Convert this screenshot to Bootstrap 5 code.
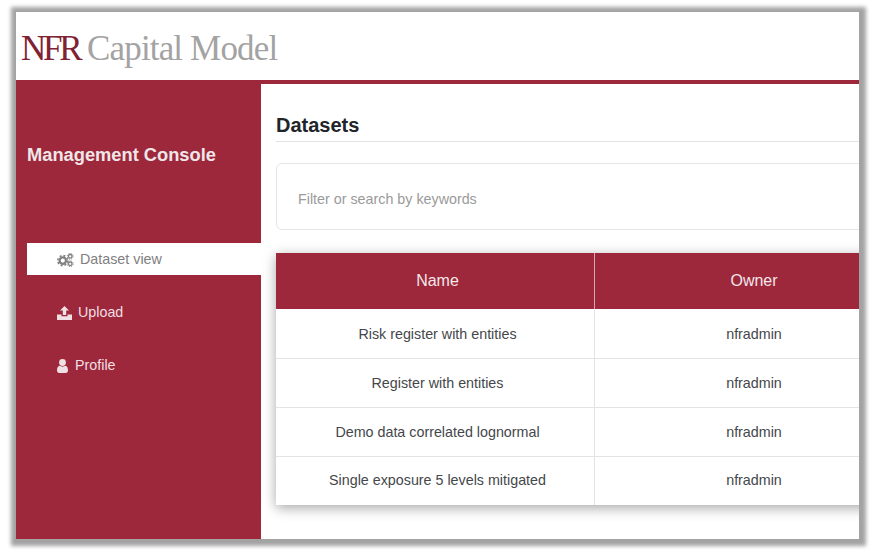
<!DOCTYPE html>
<html lang="en">
<head>
  <meta charset="UTF-8">
  <meta name="viewport" content="width=device-width, initial-scale=1">
  <title>NFR Capital Model</title>
  <link href="https://cdn.jsdelivr.net/npm/bootstrap@5.3.2/dist/css/bootstrap.min.css" rel="stylesheet">
  <style>
    body {
      background: #fff;
      height: 550px;
      overflow: hidden;
      font-family: "Liberation Sans", Arial, sans-serif;
      font-size: 14.3px;
    }
    .shot-frame {
      margin: 12px 17px 0 16px;
      height: 527px;
      background: #fff;
      overflow: hidden;
      box-shadow: 1px 1px 4px 6px #a3a3a3;
    }
    .brand-bar {
      height: 68px;
      padding: 6px 0 0 5px;
      font-family: "Liberation Serif", "Times New Roman", serif;
      font-size: 35px;
      letter-spacing: -.85px;
      color: #a3a3a3;
    }
    .brand-red { color: #7f2233; letter-spacing: -3.3px; }
    .side-panel {
      width: 245px;
      flex: none;
      background: #9d273b;
      color: #f1e6e8;
      padding-left: 11px;
    }
    .side-title {
      font-size: 18.3px;
      font-weight: 700;
      line-height: 22px;
      margin: 64px 0 77px;
      color: #efe6e8;
    }
    .side-item {
      height: 32px;
      margin-bottom: 21px;
      padding: 2px 0 0 30px;
      color: #f0dfe3;
      text-decoration: none;
      gap: 6px;
    }
    .side-item.is-active {
      background: #fff;
      color: #808080;
      gap: 6px;
    }
    .side-item.is-profile { gap: 7px; }
    .main-area {
      border-top: 4px solid #9d273b;
      padding: 29px 0 0 15px;
      min-width: 0;
      overflow: hidden;
    }
    .main-inner { width: 637px; }
    .page-title {
      font-size: 20px;
      font-weight: 700;
      line-height: 24px;
      color: #212529;
      padding-bottom: 4px;
      margin-bottom: 21px;
      border-bottom: 1px solid #e3e3e3;
    }
    .filter-box {
      height: 67px;
      border: 1px solid #e6e6e6;
      border-radius: 6px;
      padding: 7px 0 0 21px;
      margin-bottom: 23px;
      color: #9a9a9a;
    }
    .data-grid {
      margin: 0;
      box-shadow: 0 3px 12px rgba(0, 0, 0, .35);
      color: #44474a;
      text-align: center;
    }
    .data-grid th {
      background: #9d273b;
      color: #f3e8ea;
      font-size: 16px;
      font-weight: 400;
      height: 56px;
      vertical-align: middle;
      border-bottom: 0;
      border-right: 1px solid #d3a9b1;
    }
    .data-grid td {
      height: 49px;
      vertical-align: middle;
      padding: 2px 0 0;
      border-bottom: 1px solid #e3e3e3;
      border-right: 1px solid #e3e3e3;
    }
    .data-grid th:first-child { padding-left: 13px; }
    .data-grid td:first-child { padding-left: 5px; }
    .data-grid tr:last-child td { border-bottom: 0; padding-top: 0; }
    .data-grid th:last-child, .data-grid td:last-child { border-right: 0; }
    .col-half { width: 50%; }
  </style>
</head>
<body>

<div class="shot-frame d-flex flex-column">
  <!-- header -->
  <div class="brand-bar d-flex align-items-center"><span><span class="brand-red">NFR</span> Capital Model</span></div>

  <div class="d-flex flex-grow-1">
    <!-- sidebar -->
    <div class="side-panel">
      <div class="side-title">Management Console</div>
      <a class="side-item is-active d-flex align-items-center" href="#">
        <svg width="17" height="14" viewBox="0 0 17 14" fill="none" stroke="#808080">
          <circle cx="5.800" cy="7.600" r="3.200" stroke-width="2.200"/>
          <circle cx="5.800" cy="7.600" r="5" stroke-width="1.600" stroke-dasharray="2 1.930"/>
          <circle cx="13.200" cy="3.300" r="1.800" stroke-width="1.300"/>
          <circle cx="13.200" cy="3.300" r="2.900" stroke-width="1" stroke-dasharray="1.200 1.080"/>
          <circle cx="13.200" cy="10.800" r="1.800" stroke-width="1.300"/>
          <circle cx="13.200" cy="10.800" r="2.900" stroke-width="1" stroke-dasharray="1.200 1.080"/>
        </svg>
        Dataset view
      </a>
      <a class="side-item d-flex align-items-center" href="#">
        <svg width="15" height="14" viewBox="0 0 15 14" fill="#f0dfe3">
          <path d="M7.500 0 12 4.600H9.200V9H5.800V4.600H3z"/>
          <path d="M0 8.500h4.500v1.700h6V8.500H15V14H0z"/>
        </svg>
        Upload
      </a>
      <a class="side-item is-profile d-flex align-items-center" href="#">
        <svg width="11" height="14" viewBox="0 0 11 14" fill="#f0dfe3">
          <circle cx="5.500" cy="3.500" r="3.400"/>
          <path d="M2.600 6.800c1.600 1.100 4.200 1.100 5.800 0C10.200 7.100 11 8.800 11 11.600 11 13.200 10 14 8.800 14H2.200C1 14 0 13.200 0 11.600 0 8.800.8 7.100 2.600 6.800z"/>
        </svg>
        Profile
      </a>
    </div>

    <!-- main -->
    <div class="main-area flex-grow-1">
      <div class="main-inner">
        <div class="page-title">Datasets</div>
        <div class="filter-box d-flex align-items-center">Filter or search by keywords</div>
        <table class="table data-grid">
          <thead>
            <tr><th class="col-half">Name</th><th class="col-half">Owner</th></tr>
          </thead>
          <tbody>
            <tr><td>Risk register with entities</td><td>nfradmin</td></tr>
            <tr><td>Register with entities</td><td>nfradmin</td></tr>
            <tr><td>Demo data correlated lognormal</td><td>nfradmin</td></tr>
            <tr><td>Single exposure 5 levels mitigated</td><td>nfradmin</td></tr>
          </tbody>
        </table>
      </div>
    </div>
  </div>
</div>

<script src="https://cdn.jsdelivr.net/npm/bootstrap@5.3.2/dist/js/bootstrap.bundle.min.js"></script>
</body>
</html>
